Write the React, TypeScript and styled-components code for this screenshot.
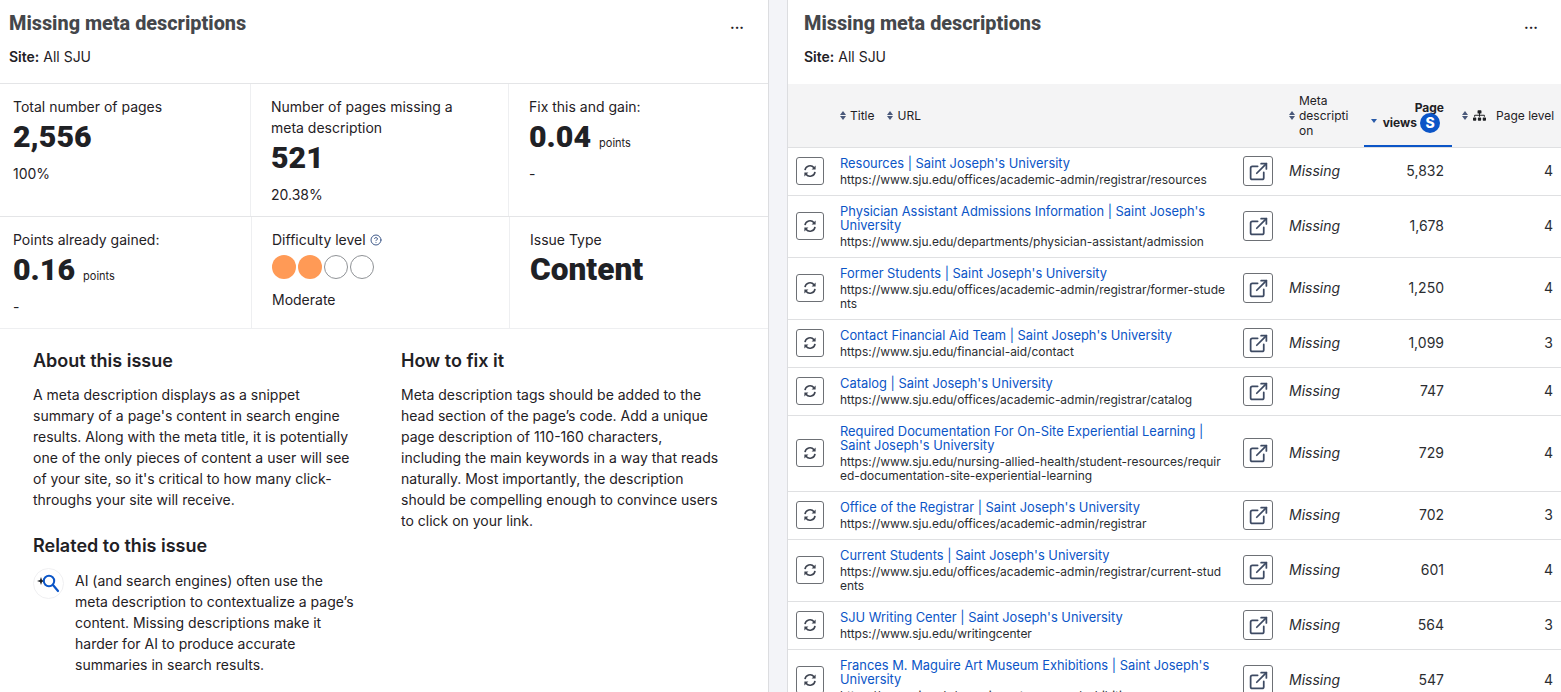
import React from 'react';
import styled, { createGlobalStyle } from 'styled-components';
import { CircleHelp, ExternalLink } from 'lucide-react';
import { FaSitemap } from 'react-icons/fa';

interface PageRow {
  title: string;
  url: string;
  views: string;
  level: number;
}

const rows: PageRow[] = [
  { title: "Resources | Saint Joseph's University", url: 'https://www.sju.edu/offices/academic-admin/registrar/resources', views: '5,832', level: 4 },
  { title: "Physician Assistant Admissions Information | Saint Joseph's University", url: 'https://www.sju.edu/departments/physician-assistant/admission', views: '1,678', level: 4 },
  { title: "Former Students | Saint Joseph's University", url: 'https://www.sju.edu/offices/academic-admin/registrar/former-students', views: '1,250', level: 4 },
  { title: "Contact Financial Aid Team | Saint Joseph's University", url: 'https://www.sju.edu/financial-aid/contact', views: '1,099', level: 3 },
  { title: "Catalog | Saint Joseph's University", url: 'https://www.sju.edu/offices/academic-admin/registrar/catalog', views: '747', level: 4 },
  { title: "Required Documentation For On-Site Experiential Learning | Saint Joseph's University", url: 'https://www.sju.edu/nursing-allied-health/student-resources/required-documentation-site-experiential-learning', views: '729', level: 4 },
  { title: "Office of the Registrar | Saint Joseph's University", url: 'https://www.sju.edu/offices/academic-admin/registrar', views: '702', level: 3 },
  { title: "Current Students | Saint Joseph's University", url: 'https://www.sju.edu/offices/academic-admin/registrar/current-students', views: '601', level: 4 },
  { title: "SJU Writing Center | Saint Joseph's University", url: 'https://www.sju.edu/writingcenter', views: '564', level: 3 },
  { title: "Frances M. Maguire Art Museum Exhibitions | Saint Joseph's University", url: 'https://www.sju.edu/maguire-art-museum/exhibitions', views: '547', level: 4 },
];

const GlobalStyle = createGlobalStyle`
  html, body {
    margin: 0;
    height: 692px;
    overflow: hidden;
    background: #fff;
  }
  body {
    font-family: Inter, "Liberation Sans", sans-serif;
    color: #1f2125;
  }
`;

const Page = styled.div`
  display: flex;
  width: 1561px;
  height: 692px;
  overflow: hidden;
`;

const LeftPanel = styled.section`
  width: 768px;
  flex: none;
`;

const Gutter = styled.div`
  width: 19px;
  flex: none;
  background: #f3f4f8;
  border-left: 1px solid #dcdde0;
  box-sizing: border-box;
`;

const RightPanel = styled.section`
  flex: 1;
  min-width: 0;
  border-left: 1px solid #dcdde0;
`;

const PanelHead = styled.header`
  height: 83px;
  box-sizing: border-box;
  padding: 13px 0 0 9px;
  position: relative;
`;

const RightHead = styled(PanelHead)`
  padding-left: 16px;
  height: 84px;
`;

const PanelTitle = styled.h2`
  margin: 0;
  font-family: Roboto, Inter, sans-serif;
  font-size: 19.85px;
  line-height: 22px;
  font-weight: 800;
  color: #45474b;
`;

const SiteLine = styled.p`
  margin: 11px 0 0;
  font-size: 14px;
  line-height: 21px;
  b {
    font-weight: 600;
  }
`;

const MoreDots = styled.span<{ $right: number }>`
  position: absolute;
  top: 16px;
  right: ${(p) => p.$right}px;
  font-size: 14px;
  line-height: 16px;
  font-weight: 700;
  color: #1f2125;
`;

const StatRow = styled.div<{ $height: number }>`
  display: flex;
  height: ${(p) => p.$height}px;
  border-top: 1px solid #e4e5e7;
`;

const StatCell = styled.div<{ $width: number; $first?: boolean; $last?: boolean }>`
  width: ${(p) => p.$width}px;
  flex: none;
  box-sizing: border-box;
  padding: 12px 36px 0 ${(p) => (p.$first ? 13 : 20)}px;
  border-right: ${(p) => (p.$last ? 'none' : '1px solid #eeeff1')};
  font-size: 14px;
  line-height: 21px;
`;

const StatNumber = styled.div<{ $size?: number }>`
  font-family: Roboto, Inter, sans-serif;
  font-size: ${(p) => p.$size || 30.4}px;
  line-height: 40px;
  height: 40px;
  font-weight: 900;
  color: #1f2125;
  margin-bottom: 6px;
`;

const Unit = styled.span`
  font-family: Inter, sans-serif;
  font-size: 11px;
  line-height: 1;
  font-weight: 400;
  margin-left: 8px;
`;

const LabelRow = styled.div`
  display: flex;
  align-items: center;
  gap: 4px;
  color: #1f2125;
  svg {
    color: #3f5a8a;
  }
`;

const Dots = styled.div`
  display: flex;
  gap: 2px;
  margin: 5px 0 10px;
`;

const Dot = styled.span<{ $on?: boolean }>`
  width: 24px;
  height: 24px;
  flex: none;
  box-sizing: border-box;
  border-radius: 50%;
  background: ${(p) => (p.$on ? '#ff9a56' : '#fff')};
  border: ${(p) => (p.$on ? 'none' : '1px solid #8f9296')};
`;

const Copy = styled.div`
  display: grid;
  grid-template-columns: 322px 325px;
  column-gap: 46px;
  padding: 21px 0 0 33px;
  border-top: 1px solid #eeeff1;
`;

const CopyTitle = styled.h3`
  margin: 0 0 12px;
  font-size: 18px;
  line-height: 22px;
  font-weight: 600;
  color: #1f2125;
`;

const CopyText = styled.p`
  margin: 0 0 25px;
  font-size: 14px;
  line-height: 21px;
`;

const RelatedItem = styled.div`
  display: flex;
  gap: 11px;
  align-items: flex-start;
  margin-top: -1px;
`;

const RelatedText = styled(CopyText)`
  margin: 2px 0 0;
`;

const IconRound = styled.span`
  width: 31px;
  height: 31px;
  flex: none;
  border-radius: 50%;
  border: 1px solid #f0f0f2;
  box-sizing: border-box;
  display: flex;
  align-items: center;
  justify-content: center;
`;

const Table = styled.table`
  width: 773px;
  table-layout: fixed;
  border-collapse: collapse;
  font-size: 12px;
`;

const HeadRow = styled.tr`
  height: 63px;
  background: #f4f4f5;
  border-bottom: 1px solid #dfe0e2;
`;

const Th = styled.th<{ $active?: boolean }>`
  padding: 0;
  font-weight: 400;
  text-align: left;
  color: #1f2125;
  position: relative;
  box-shadow: ${(p) => (p.$active ? 'inset 0 -2px 0 #0b55c7' : 'none')};
`;

const HeadLabel = styled.span`
  display: flex;
  align-items: center;
  gap: 4px;
  line-height: 15px;
`;

const SortPair = styled.span`
  display: inline-flex;
  flex-direction: column;
  gap: 1px;
  flex: none;
  &::before,
  &::after {
    content: '';
    width: 0;
    height: 0;
    border-left: 3.5px solid transparent;
    border-right: 3.5px solid transparent;
  }
  &::before {
    border-bottom: 4px solid #49587a;
  }
  &::after {
    border-top: 4px solid #49587a;
  }
`;

const TitleHead = styled.div`
  display: flex;
  gap: 13px;
  padding-left: 8px;
`;

const MetaHead = styled(HeadLabel)`
  padding-left: 8px;
  align-items: center;
  span:last-child {
    width: 50px;
    overflow-wrap: anywhere;
  }
`;

const ViewsHead = styled.div`
  display: flex;
  align-items: center;
  justify-content: space-between;
  padding: 4px 8px 0 7px;
  font-weight: 700;
  line-height: 14px;
  text-align: right;
`;

const DownCaret = styled.span`
  width: 0;
  height: 0;
  margin-top: 8px;
  border-left: 3.5px solid transparent;
  border-right: 3.5px solid transparent;
  border-top: 4px solid #2a5ba8;
`;

const ViewsStack = styled.div`
  display: flex;
  flex-direction: column;
  align-items: flex-end;
`;

const ViewsLine = styled.span`
  display: flex;
  align-items: center;
  gap: 3px;
  margin: -2px 4px 0 0;
`;

const SBadge = styled.span`
  width: 20px;
  height: 20px;
  border-radius: 50%;
  background: #0b55c7;
  color: #fff;
  font-size: 14px;
  font-weight: 800;
  line-height: 20px;
  text-align: center;
`;

const LevelHead = styled(HeadLabel)`
  padding-left: 10px;
  gap: 5px;
  svg {
    margin-right: 5px;
    color: #1f2125;
  }
`;

const BodyRow = styled.tr`
  border-bottom: 1px solid #dfe0e2;
`;

const Td = styled.td<{ $align?: string }>`
  padding: 0 8px 2px;
  text-align: ${(p) => p.$align || 'left'};
  vertical-align: middle;
  font-size: 14px;
  color: #2b2d31;
`;

const TitleCell = styled.td`
  padding: 9px 8px 8px;
  vertical-align: top;
`;

const TitleLink = styled.a`
  display: block;
  font-size: 12.88px;
  line-height: 14px;
  color: #0b55c7;
`;

const UrlLine = styled.div`
  margin-top: 2px;
  font-size: 11.96px;
  line-height: 14px;
  color: #2b2d31;
  word-break: break-all;
`;

const MissingText = styled.em`
  font-size: 14px;
  color: #2b2d31;
`;

const BoxButton = styled.button<{ $size: number }>`
  width: ${(p) => p.$size}px;
  height: ${(p) => p.$size}px;
  padding: 0;
  display: flex;
  align-items: center;
  justify-content: center;
  background: #fff;
  border: 1px solid #6d7075;
  border-radius: 3px;
  color: #3d4a63;
`;

const ActionCell = styled.td`
  padding: 0 0 0 8px;
  vertical-align: middle;
`;

const OpenCell = styled.td`
  padding: 0 0 0 8px;
  vertical-align: middle;
`;

const SparkSearch = () => (
  <svg width="23" height="19" viewBox="0 0 23 19" fill="none">
    <path d="M4 3 L5 6 L8 7 L5 8 L4 11 L3 8 L0 7 L3 6 Z" fill="#1f2125" />
    <circle cx="12" cy="7" r="5.2" stroke="#0b55c7" strokeWidth="2" />
    <path d="M16 11 L21 17" stroke="#0b55c7" strokeWidth="2.2" strokeLinecap="round" />
  </svg>
);

const SyncIcon = () => (
  <svg width="14" height="14" viewBox="0 0 14 14" fill="none">
    <path d="M2 6.2 A5 5 0 0 1 11 3.8" stroke="#3d4350" strokeWidth="1.6" />
    <path d="M12.6 1.4 V5.4 H8.6 Z" fill="#3d4350" />
    <path d="M12 7.8 A5 5 0 0 1 3 10.2" stroke="#3d4350" strokeWidth="1.6" />
    <path d="M1.4 12.6 V8.6 H5.4 Z" fill="#3d4350" />
  </svg>
);

const App: React.FC = () => (
  <Page>
    <GlobalStyle />
    <LeftPanel>
      <PanelHead>
        <PanelTitle>Missing meta descriptions</PanelTitle>
        <SiteLine><b>Site:</b> All SJU</SiteLine>
        <MoreDots $right={24}>...</MoreDots>
      </PanelHead>
      <StatRow $height={132}>
        <StatCell $width={251} $first>
          Total number of pages
          <StatNumber>2,556</StatNumber>
          100%
        </StatCell>
        <StatCell $width={258}>
          Number of pages missing a meta description
          <StatNumber>521</StatNumber>
          20.38%
        </StatCell>
        <StatCell $width={259} $last>
          Fix this and gain:
          <StatNumber>0.04<Unit>points</Unit></StatNumber>
          -
        </StatCell>
      </StatRow>
      <StatRow $height={111}>
        <StatCell $width={252} $first>
          Points already gained:
          <StatNumber>0.16<Unit>points</Unit></StatNumber>
          -
        </StatCell>
        <StatCell $width={258}>
          <LabelRow>Difficulty level <CircleHelp size={12} /></LabelRow>
          <Dots>
            <Dot $on />
            <Dot $on />
            <Dot />
            <Dot />
          </Dots>
          Moderate
        </StatCell>
        <StatCell $width={258} $last>
          Issue Type
          <StatNumber $size={31.6}>Content</StatNumber>
        </StatCell>
      </StatRow>
      <Copy>
        <div>
          <CopyTitle>About this issue</CopyTitle>
          <CopyText>
            A meta description displays as a snippet summary of a page's content in search engine results. Along with the meta title, it is potentially one of the only pieces of content a user will see of your site, so it's critical to how many click-throughs your site will receive.
          </CopyText>
          <CopyTitle>Related to this issue</CopyTitle>
          <RelatedItem>
            <IconRound><SparkSearch /></IconRound>
            <RelatedText>
              AI (and search engines) often use the meta description to contextualize a page’s content. Missing descriptions make it harder for AI to produce accurate summaries in search results.
            </RelatedText>
          </RelatedItem>
        </div>
        <div>
          <CopyTitle>How to fix it</CopyTitle>
          <CopyText>
            Meta description tags should be added to the head section of the page’s code. Add a unique page description of 110-160 characters, including the main keywords in a way that reads naturally. Most importantly, the description should be compelling enough to convince users to click on your link.
          </CopyText>
        </div>
      </Copy>
    </LeftPanel>
    <Gutter />
    <RightPanel>
      <RightHead>
        <PanelTitle>Missing meta descriptions</PanelTitle>
        <SiteLine><b>Site:</b> All SJU</SiteLine>
        <MoreDots $right={23}>...</MoreDots>
      </RightHead>
      <Table>
        <colgroup>
          <col style={{ width: 44 }} />
          <col style={{ width: 403 }} />
          <col style={{ width: 46 }} />
          <col style={{ width: 83 }} />
          <col style={{ width: 88 }} />
          <col />
        </colgroup>
        <thead>
          <HeadRow>
            <Th />
            <Th>
              <TitleHead>
                <HeadLabel><SortPair />Title</HeadLabel>
                <HeadLabel><SortPair />URL</HeadLabel>
              </TitleHead>
            </Th>
            <Th />
            <Th>
              <MetaHead><SortPair /><span>Meta description</span></MetaHead>
            </Th>
            <Th $active>
              <ViewsHead>
                <DownCaret />
                <ViewsStack>
                  Page
                  <ViewsLine>views <SBadge>S</SBadge></ViewsLine>
                </ViewsStack>
              </ViewsHead>
            </Th>
            <Th>
              <LevelHead><SortPair /><FaSitemap size={13} />Page level</LevelHead>
            </Th>
          </HeadRow>
        </thead>
        <tbody>
          {rows.map((row) => (
            <BodyRow key={row.url}>
              <ActionCell>
                <BoxButton $size={28}><SyncIcon /></BoxButton>
              </ActionCell>
              <TitleCell>
                <TitleLink>{row.title}</TitleLink>
                <UrlLine>{row.url}</UrlLine>
              </TitleCell>
              <OpenCell>
                <BoxButton $size={30}><ExternalLink size={21} strokeWidth={2} /></BoxButton>
              </OpenCell>
              <Td><MissingText>Missing</MissingText></Td>
              <Td $align="right">{row.views}</Td>
              <Td $align="right">{row.level}</Td>
            </BodyRow>
          ))}
        </tbody>
      </Table>
    </RightPanel>
  </Page>
);

export default App;
